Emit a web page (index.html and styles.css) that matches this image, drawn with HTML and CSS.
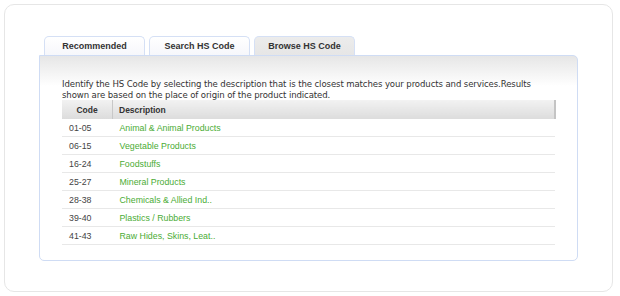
FILE: index.html
```html
<!DOCTYPE html>
<html lang="en">
<head>
    <meta charset="UTF-8">
    <title>Browse HS Code</title>
    <link rel="stylesheet" href="styles.css">
</head>
<body>
    <div class="card">
        <div class="tabs">
            <div class="tab">Recommended</div>
            <div class="tab">Search HS Code</div>
            <div class="tab active">Browse HS Code</div>
        </div>
        <div class="panel">
            <p class="intro">Identify the HS Code by selecting the description that is the closest matches your products and services.Results shown are based on the place of origin of the product indicated.</p>
            <table class="hs-table">
                <thead>
                    <tr><th class="code-col">Code</th><th>Description</th></tr>
                </thead>
                <tbody>
                    <tr><td>01-05</td><td><a href="#">Animal &amp; Animal Products</a></td></tr>
                    <tr><td>06-15</td><td><a href="#">Vegetable Products</a></td></tr>
                    <tr><td>16-24</td><td><a href="#">Foodstuffs</a></td></tr>
                    <tr><td>25-27</td><td><a href="#">Mineral Products</a></td></tr>
                    <tr><td>28-38</td><td><a href="#">Chemicals &amp; Allied Ind..</a></td></tr>
                    <tr><td>39-40</td><td><a href="#">Plastics / Rubbers</a></td></tr>
                    <tr><td>41-43</td><td><a href="#">Raw Hides, Skins, Leat..</a></td></tr>
                </tbody>
            </table>
        </div>
    </div>
</body>
</html>
```

FILE: styles.css
```css
body {
    margin: 0;
    background: #fff;
    font-family: "Liberation Sans", Arial, sans-serif;
    color: #444;
}
.card {
    margin: 4px;
    width: 609px;
    height: 288px;
    box-sizing: border-box;
    border: 1px solid #e6e6e6;
    border-radius: 10px;
    padding: 31px 0 0 34px;
}
.tabs {
    display: flex;
    gap: 4px;
    padding-left: 5px;
}
.tab {
    width: 99px;
    height: 18px;
    line-height: 19px;
    text-align: center;
    font-size: 9px;
    font-weight: bold;
    color: #333;
    border: 1px solid #d5e0f5;
    border-bottom: none;
    border-radius: 5px 5px 0 0;
    background: linear-gradient(#fff, #f6f7fb);
}
.tab.active {
    background: linear-gradient(#ececec, #e6e6e6);
}
.panel {
    width: 539px;
    height: 206px;
    box-sizing: border-box;
    border: 1px solid #cfdcf4;
    border-radius: 0 5px 5px 5px;
    background: linear-gradient(#e6e6e6, #fff 30px);
    padding: 22px 22px 0 22px;
}
.intro {
    margin: 0;
    font-family: "DejaVu Sans Condensed", "DejaVu Sans", sans-serif;
    font-size: 9.5px;
    letter-spacing: -0.1px;
    line-height: 11px;
    color: #333;
}
.hs-table {
    width: 494px;
    border-collapse: collapse;
    font-size: 8.8px;
}
.hs-table th {
    height: 19px;
    padding: 0 6px;
    text-align: left;
    font-size: 8.5px;
    font-weight: bold;
    color: #333;
    background: linear-gradient(#f2f2f2, #dcdcdc);
    border-right: 1px solid #c8c8c8;
}
.hs-table th:last-child {
    border-right: 2px solid #c4c4c4;
}
.hs-table th.code-col {
    width: 38px;
    text-align: center;
}
.hs-table td {
    height: 17px;
    padding: 0 7px;
    border-bottom: 1px solid #e8e8e8;
}
.hs-table a {
    color: #4aac35;
    text-decoration: none;
}
```
